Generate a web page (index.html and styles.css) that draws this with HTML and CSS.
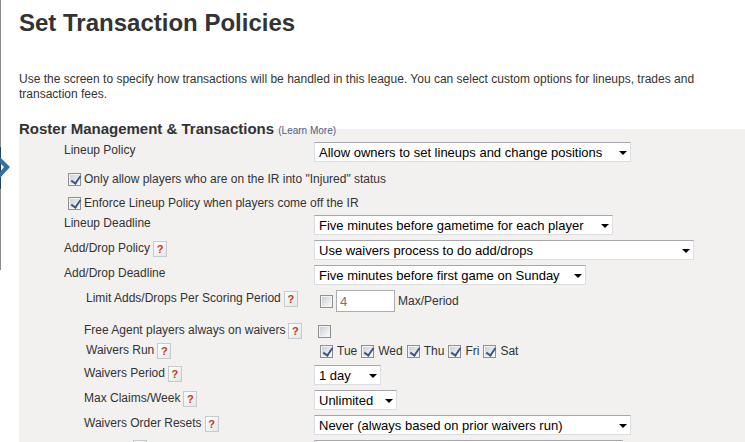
FILE: index.html
```html
<!DOCTYPE html>
<html lang="en">
<head>
  <meta charset="UTF-8" />
  <meta name="viewport" content="width=device-width, initial-scale=1" />
  <title>Set Transaction Policies</title>
  <link rel="stylesheet" href="styles.css">
</head>
<body>

  <!-- Edge of the side menu, with the marker for the current page -->
  <div class="menu-edge">
    <svg class="menu-marker" width="10" height="42" viewBox="0 0 10 42" aria-hidden="true">
      <rect x="0" y="0" width="1" height="42" fill="#1f4460" />
      <path d="M0 10 L10 20 L0 31 V25 L4 20 L0 16 Z" fill="#35709f" />
    </svg>
  </div>

  <main>
    <h1>Set Transaction Policies</h1>
    <p class="intro">Use the screen to specify how transactions will be handled in this league. You can select custom options for lineups, trades and transaction fees.</p>

    <h2>Roster Management &amp; Transactions <a href="#">(Learn More)</a></h2>

    <form class="panel">
      <div class="row">
        <div class="label"><label for="lineupPolicy">Lineup Policy</label></div>
        <span class="select w-xl">
          <select id="lineupPolicy"><option>Allow owners to set lineups and change positions</option></select>
        </span>
      </div>

      <div class="check-row">
        <input type="checkbox" id="irOnly" checked />
        <label for="irOnly">Only allow players who are on the IR into "Injured" status</label>
      </div>
      <div class="check-row">
        <input type="checkbox" id="irEnforce" checked />
        <label for="irEnforce">Enforce Lineup Policy when players come off the IR</label>
      </div>

      <div class="row">
        <div class="label"><label for="lineupDeadline">Lineup Deadline</label></div>
        <span class="select w-lg">
          <select id="lineupDeadline"><option>Five minutes before gametime for each player</option></select>
        </span>
      </div>
      <div class="row">
        <div class="label"><label for="addDropPolicy">Add/Drop Policy</label><button type="button" class="help">?</button></div>
        <span class="select w-full">
          <select id="addDropPolicy"><option>Use waivers process to do add/drops</option></select>
        </span>
      </div>
      <div class="row">
        <div class="label"><label for="addDropDeadline">Add/Drop Deadline</label></div>
        <span class="select w-md">
          <select id="addDropDeadline"><option>Five minutes before first game on Sunday</option></select>
        </span>
      </div>

      <div class="row row-limit">
        <div class="label sub sub-deep"><label for="limitAdds">Limit Adds/Drops Per Scoring Period</label><button type="button" class="help">?</button></div>
        <div class="limit">
          <input type="checkbox" id="limitAdds" />
          <input type="text" id="maxPeriod" value="4" disabled />
          <label for="maxPeriod">Max/Period</label>
        </div>
      </div>
      <div class="row row-agents">
        <div class="label sub"><label for="alwaysWaivers">Free Agent players always on waivers</label><button type="button" class="help">?</button></div>
        <div class="single"><input type="checkbox" id="alwaysWaivers" /></div>
      </div>
      <div class="row row-days">
        <div class="label sub sub-deep"><span>Waivers Run</span><button type="button" class="help">?</button></div>
        <div class="days">
          <input type="checkbox" id="tue" checked /><label for="tue">Tue</label>
          <input type="checkbox" id="wed" checked /><label for="wed">Wed</label>
          <input type="checkbox" id="thu" checked /><label for="thu">Thu</label>
          <input type="checkbox" id="fri" checked /><label for="fri">Fri</label>
          <input type="checkbox" id="sat" checked /><label for="sat">Sat</label>
        </div>
      </div>

      <div class="row">
        <div class="label sub"><label for="waiversPeriod">Waivers Period</label><button type="button" class="help">?</button></div>
        <span class="select w-xs">
          <select id="waiversPeriod"><option>1 day</option></select>
        </span>
      </div>
      <div class="row">
        <div class="label sub"><label for="maxClaims">Max Claims/Week</label><button type="button" class="help">?</button></div>
        <span class="select w-sm">
          <select id="maxClaims"><option>Unlimited</option></select>
        </span>
      </div>
      <div class="row">
        <div class="label sub"><label for="orderResets">Waivers Order Resets</label><button type="button" class="help">?</button></div>
        <span class="select w-xl">
          <select id="orderResets"><option>Never (always based on prior waivers run)</option></select>
        </span>
      </div>
      <div class="row">
        <div class="label next"><button type="button" class="help"></button></div>
        <span class="select w-last">
          <select><option></option></select>
        </span>
      </div>
    </form>
  </main>

</body>
</html>
```
FILE: styles.css
```css
* {
  box-sizing: border-box;
}
body {
  margin: 0;
  height: 100vh;
  overflow: hidden;
  background: #fff;
  color: #333;
  font: 12px/15px "Liberation Sans", Arial, sans-serif;
}
.menu-edge {
  position: absolute;
  left: 0;
  top: 0;
  height: 270px;
  border-left: 1px solid #8c8c8c;
}
.menu-marker {
  position: absolute;
  left: -1px;
  top: 147px;
}
main {
  padding: 9px 0 0 19px;
}
h1 {
  margin: 0;
  font-size: 24px;
  line-height: 28px;
}
.intro {
  margin: 35px 16px 18px 0;
}
h2 {
  margin: 0;
  font-size: 15px;
  line-height: 18px;
}
h2 a {
  color: #4c618c;
  font-size: 10px;
  font-weight: normal;
  text-decoration: none;
}

/* The panel starts behind the lower half of the heading */
.panel {
  margin-top: -11px;
  padding-top: 13px;
  background: #f2f1f0;
}
.row {
  display: flex;
  align-items: flex-start;
  min-height: 25px;
}
.label {
  display: flex;
  gap: 3px;
  flex: 0 0 295px;
  padding: 1px 0 0 45px;
}
.sub {
  padding-left: 65px;
}
.sub-deep {
  padding-left: 67px;
}
.next {
  padding: 0 0 0 114px;
}
.check-row {
  display: flex;
  align-items: center;
  gap: 3px;
  height: 24px;
  padding-left: 49px;
}

/* Controls */
.help {
  width: 14px;
  height: 16px;
  padding: 0;
  border: 1px solid #c4cbce;
  background: linear-gradient(135deg, #fff, #e4e6e6);
  color: #c03a20;
  font: bold 11px/14px "Liberation Sans", Arial, sans-serif;
  text-align: center;
}
input[type="checkbox"] {
  appearance: none;
  flex: none;
  width: 13px;
  height: 13px;
  margin: 0;
  border: 1px solid #8e8f8f;
  background: linear-gradient(135deg, #c6cbd1, #fff);
  box-shadow: inset 0 0 0 1px #f4f4f4;
}
input[type="checkbox"]:checked::before {
  content: "";
  display: block;
  width: 4px;
  height: 8px;
  margin: 0 0 0 4px;
  border: solid #3c5488;
  border-width: 0 2px 2px 0;
  transform: rotate(35deg);
}
.select {
  position: relative;
}
.select::after {
  content: "";
  position: absolute;
  right: 4px;
  top: 9px;
  border: solid transparent;
  border-width: 4px 4px 0;
  border-top-color: #000;
  pointer-events: none;
}
select {
  appearance: none;
  display: block;
  width: 100%;
  height: 20px;
  margin: 0;
  padding: 0 16px 0 4px;
  border: 1px solid #dcdde0;
  border-top-color: #a5a7ad;
  border-radius: 0;
  background: #fff;
  color: #000;
  font: 13px "Liberation Sans", Arial, sans-serif;
}
.w-xs { width: 67px; }
.w-sm { width: 83px; }
.w-md { width: 272px; }
.w-lg { width: 299px; }
.w-xl { width: 317px; }
.w-full { width: 380px; }
.w-last { width: 309px; }

.row-limit {
  min-height: 32px;
}
.limit {
  display: flex;
  align-items: center;
  gap: 3px;
  padding-left: 6px;
}
.limit input[type="text"] {
  width: 59px;
  height: 22px;
  padding: 0 3px;
  border: 1px solid #abadb3;
  background: #fff;
  color: #777;
  font: 13px "Liberation Sans", Arial, sans-serif;
}
.row-agents {
  min-height: 20px;
}
.single {
  padding: 3px 0 0 4px;
}
.row-days {
  min-height: 23px;
}
.days {
  display: flex;
  align-items: center;
  gap: 4px;
  padding: 2px 0 0 6px;
}
```
